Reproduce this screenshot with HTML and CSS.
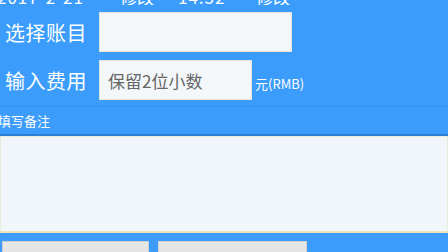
FILE: index.html
```html
<!DOCTYPE html>
<html>
   <head>
      <meta name="viewport" content="width=device-width, initial-scale=1">
      <link rel="stylesheet" href="styles.css">
   </head>
   <body>
      <div class="toprow">
        <span class="date">2017-2-21</span>
        <span class="edit1">修改</span>
        <span class="time">14:32</span>
        <span class="edit2">修改</span>
      </div>
      <div class="row row-account">
        <label class="label">选择账目</label>
        <input type="text" class="field field-wide">
      </div>
      <div class="row row-money">
        <label class="label">输入费用</label>
        <input type="text" class="field field-short" placeholder="保留2位小数">
        <span class="unit">元(RMB)</span>
      </div>
      <div class="note-title">填写备注</div>
      <textarea class="note"></textarea>
      <div class="buttons">
        <button class="btn">保存记录</button>
        <button class="btn btn-second">清空重填</button>
      </div>
   </body>
</html>
```

FILE: styles.css
```css
html, body {
	margin: 0;
	padding: 0;
	height: 252px;
	overflow: hidden;
}

body {
	background-color: #3b9cfc;
	font-family: "Noto Sans CJK SC", "Liberation Sans", sans-serif;
	color: white;
	width: 448px;
}

.toprow {
	display: flex;
	height: 5px;
	overflow: hidden;
	font-size: 17px;
	line-height: 17px;
	white-space: nowrap;
}

.toprow span {
	margin-top: -12px;
}

.date {
	margin-left: -3px;
	width: 123px;
	letter-spacing: 1px;
}

.edit1 {
	width: 58px;
}

.time {
	width: 78px;
	letter-spacing: 1px;
}

.row {
	display: flex;
	align-items: center;
}

.row-account {
	margin-top: 7px;
}

.row-money {
	margin-top: 8px;
}

.label {
	font-size: 20px;
	width: 99px;
	padding-left: 5px;
	box-sizing: border-box;
	letter-spacing: 0.5px;
}

.field {
	height: 40px;
	box-sizing: border-box;
	background-color: #f3f7fa;
	border: 1px solid #e4e6e2;
	border-bottom-color: #efe6cc;
	margin: 0;
	padding: 0 8px;
	font-family: inherit;
	font-size: 17px;
	outline: none;
}

.field-wide {
	width: 193px;
}

.field-short {
	width: 153px;
}

.field::placeholder {
	color: #666;
}

.unit {
	font-size: 13px;
	margin-left: 3px;
	margin-top: 6px;
}

.note-title {
	margin-top: 6px;
	border-top: 1px solid #3791ea;
	padding: 4px 0 0 0;
	margin-left: -2px;
	font-size: 13px;
	border-bottom: 2px solid #2a7fd6;
	box-sizing: border-box;
	height: 30px;
}

.note {
	display: block;
	width: 448px;
	height: 97px;
	margin: 0;
	box-sizing: border-box;
	background-color: #f1f6fa;
	border: 1px solid #e8ecde;
	border-bottom: 2px solid #f0e2b8;
	resize: none;
	outline: none;
}

.buttons {
	display: flex;
	gap: 9px;
	padding: 8px 0 0 2px;
}

.btn {
	width: 147px;
	height: 40px;
	box-sizing: border-box;
	background: linear-gradient(#e8e8e8, #d8d8d8);
	border: 1px solid #cfcfcf;
	font-family: inherit;
	font-size: 16px;
	line-height: 22px;
	color: #555;
	padding: 7px 0 11px 0;
}

.btn-second {
	width: 149px;
}
```
